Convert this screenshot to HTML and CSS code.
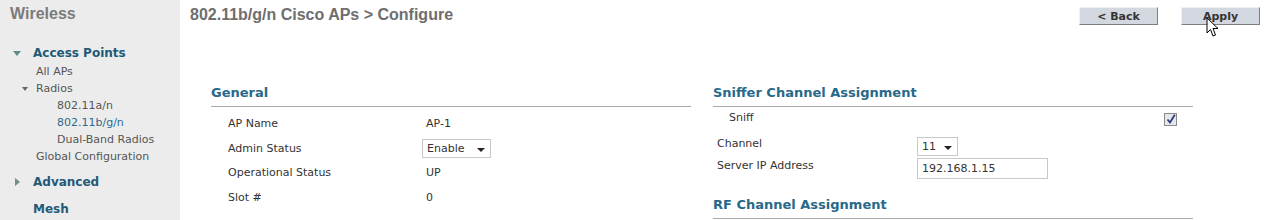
FILE: index.html
```html
<!DOCTYPE html>
<html>
<head>
<meta charset="utf-8">
<link rel="stylesheet" href="styles.css">
</head>
<body>
<div class="page">
  <nav class="sidebar">
    <div class="side-title">Wireless</div>
    <div class="nav-main open"><span class="tri-down"></span>Access Points</div>
    <div class="nav-sub l1">All APs</div>
    <div class="nav-sub l1"><span class="tri-small"></span>Radios</div>
    <div class="nav-sub l2">802.11a/n</div>
    <div class="nav-sub l2 active">802.11b/g/n</div>
    <div class="nav-sub l2">Dual-Band Radios</div>
    <div class="nav-sub l1">Global Configuration</div>
    <div class="nav-main adv"><span class="tri-right"></span>Advanced</div>
    <div class="nav-main mesh">Mesh</div>
  </nav>
  <main class="content">
    <header class="top">
      <h1 class="title">802.11b/g/n Cisco APs &gt; Configure</h1>
      <div class="buttons">
        <span class="btn">&lt; Back</span>
        <span class="btn apply">Apply
          <svg class="cursor" width="13" height="21" viewBox="0 0 13 21"><path d="M1 1 L1 16 L4.5 12.5 L7 19 L9.5 18 L7 11.5 L12 11.5 Z" fill="#fff" stroke="#000" stroke-width="1" stroke-linejoin="round"/></svg>
        </span>
      </div>
    </header>
    <div class="columns">
      <section class="panel">
        <h2 class="sec-head">General</h2>
        <div class="grows">
          <div class="grow"><span class="glabel">AP Name</span><span class="gval">AP-1</span></div>
          <div class="grow"><span class="glabel">Admin Status</span><span class="select sel-admin">Enable<i class="caret"></i></span></div>
          <div class="grow"><span class="glabel">Operational Status</span><span class="gval">UP</span></div>
          <div class="grow"><span class="glabel">Slot #</span><span class="gval">0</span></div>
        </div>
      </section>
      <section class="panel">
        <h2 class="sec-head">Sniffer Channel Assignment</h2>
        <div class="sniff-row"><span class="sniff-label">Sniff</span><span class="checkbox"><svg width="10" height="10" viewBox="0 0 10 10"><path d="M1.5 5.5 L4 8.5 L8.8 0.8" fill="none" stroke="#333a7a" stroke-width="1.8"/></svg></span></div>
        <div class="srow ch"><span class="slabel">Channel</span><span class="select sel-ch">11<i class="caret"></i></span></div>
        <div class="srow ip"><span class="slabel">Server IP Address</span><span class="input">192.168.1.15</span></div>
        <h2 class="sec-head rf">RF Channel Assignment</h2>
      </section>
    </div>
  </main>
</div>
</body>
</html>
```
FILE: styles.css
```css
html, body {
  margin: 0;
  padding: 0;
  background: #fff;
  overflow: hidden;
}
.page {
  display: flex;
  width: 1265px;
  height: 220px;
  font-family: "DejaVu Sans", Verdana, sans-serif;
  font-size: 11px;
  color: #333;
}
.sidebar {
  width: 180px;
  flex: none;
  background: #ececec;
  display: flex;
  flex-direction: column;
  color: #555;
}
.side-title {
  font-family: "Liberation Sans", Arial, sans-serif;
  font-weight: bold;
  font-size: 16px;
  color: #7b7b7b;
  line-height: 28px;
  padding-left: 10px;
}
.nav-main {
  font-weight: bold;
  font-size: 12px;
  color: #1f5a78;
  line-height: 20px;
  padding-left: 33px;
  position: relative;
  margin-top: 15px;
}
.nav-main.adv, .nav-main.mesh { margin-top: 7px; }
.nav-sub {
  line-height: 17px;
  position: relative;
}
.nav-sub.l1 { padding-left: 36px; }
.nav-sub.l2 { padding-left: 57px; }
.nav-sub.active { color: #2c6a8c; }
.tri-down {
  position: absolute;
  left: 13px;
  top: 8px;
  width: 0; height: 0;
  border-left: 4px solid transparent;
  border-right: 4px solid transparent;
  border-top: 5px solid #5d8c8c;
}
.tri-small {
  position: absolute;
  left: 22px;
  top: 7px;
  width: 0; height: 0;
  border-left: 3px solid transparent;
  border-right: 3px solid transparent;
  border-top: 4px solid #666;
}
.tri-right {
  position: absolute;
  left: 15px;
  top: 6px;
  width: 0; height: 0;
  border-top: 4px solid transparent;
  border-bottom: 4px solid transparent;
  border-left: 5px solid #6f8f88;
}
.content {
  flex: 1;
  display: flex;
  flex-direction: column;
  padding-left: 10px;
}
.top {
  display: flex;
  justify-content: space-between;
  align-items: flex-start;
  height: 30px;
}
.title {
  margin: 0;
  font-family: "Liberation Sans", Arial, sans-serif;
  font-weight: bold;
  font-size: 16px;
  color: #6e6e6e;
  line-height: 30px;
}
.buttons {
  display: flex;
  gap: 23px;
  padding-top: 7px;
  padding-right: 5px;
}
.btn {
  position: relative;
  width: 77px;
  height: 16px;
  line-height: 17px;
  text-align: center;
  font-weight: bold;
  font-size: 11px;
  color: #333;
  background: #d3d7df;
  border: 1px solid;
  border-color: #eef0f4 #7d7d7d #7d7d7d #eef0f4;
}
.cursor {
  position: absolute;
  left: 24px;
  top: 9px;
}
.columns {
  display: flex;
  gap: 22px;
  margin-top: 54px;
  padding-left: 21px;
}
.panel {
  width: 480px;
  display: flex;
  flex-direction: column;
}
.sec-head {
  margin: 0;
  font-size: 13px;
  font-weight: bold;
  color: #27698a;
  line-height: 18px;
  padding-bottom: 4px;
  border-bottom: 1px solid #a8a8a8;
}
.grows {
  display: flex;
  flex-direction: column;
  margin-top: 4px;
}
.grow {
  display: flex;
  align-items: center;
  height: 24.7px;
  padding-left: 17px;
}
.glabel { width: 198px; }
.select {
  position: relative;
  box-sizing: border-box;
  border: 1px solid #c8c8c8;
  background: #fff;
  padding-left: 4px;
  line-height: 17px;
  height: 19px;
}
.sel-admin { width: 69px; margin-left: -4px; }
.sel-ch { width: 41px; }
.caret {
  position: absolute;
  right: 5px;
  top: 8px;
  width: 0; height: 0;
  border-left: 4px solid transparent;
  border-right: 4px solid transparent;
  border-top: 4px solid #222;
}
.sniff-row {
  display: flex;
  justify-content: space-between;
  align-items: center;
  height: 20px;
  padding-left: 16px;
  padding-right: 16px;
}
.checkbox {
  box-sizing: border-box;
  width: 13px;
  height: 13px;
  border: 1px solid #8a8a8a;
  background: #e4e8ee;
  display: flex;
  align-items: center;
  justify-content: center;
  margin-top: 4px;
}
.srow {
  display: flex;
  align-items: flex-start;
  padding-left: 4px;
}
.srow.ch { margin-top: 9px; height: 21px; }
.srow.ip { height: 22px; }
.slabel { width: 200px; line-height: 15px; }
.sel-ch { margin-top: 1px; }
.input {
  box-sizing: border-box;
  width: 131px;
  height: 21px;
  border: 1px solid #c8c8c8;
  line-height: 19px;
  padding-left: 4px;
  margin-top: 1px;
}
.srow.ip .slabel { padding-top: 1px; }
.sec-head.rf { margin-top: 17px; }
```
